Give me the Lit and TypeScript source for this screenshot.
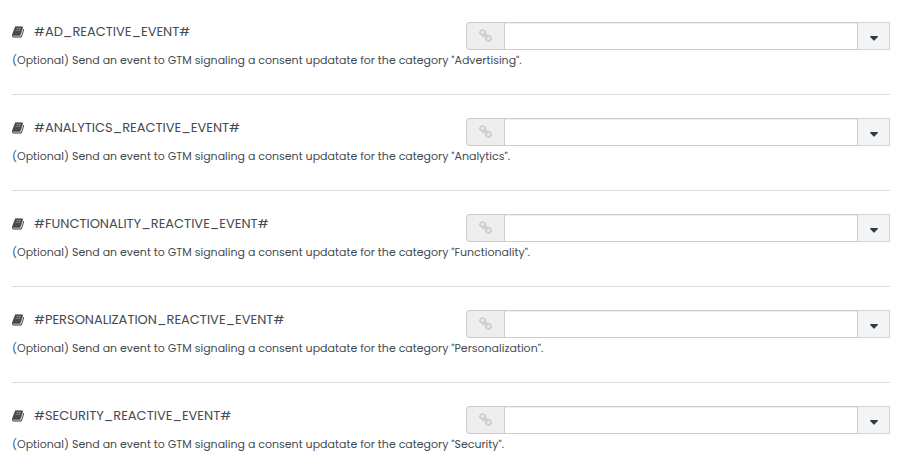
import { LitElement, html, css, svg } from "lit";
import { customElement, property } from "lit/decorators.js";

const bookPath =
  "M1639 1058q40-57 18-129l-275-906q-19-64-76.5-107.5t-122.5-43.5h-923q-77 0-148.5 53.5t-99.5 131.5q-24 67-2 127 0 4 3 27t4 37q1 8-3 21.5t-3 19.5q2 11 8 21t16.5 23.5t16.5 23.5q23 38 45 91.5t30 91.5q3 10 .5 30t-.5 28q3 11 17 28t17 23q21 36 42 92t25 90q1 9-2.5 32t.5 28q4 13 22 30.5t22 22.5q19 26 42.5 84.5t27.5 96.5q1 8-3 25.5t-2 26.5q2 8 9 18t18 23t17 21q8 12 16.5 30.5t15 35t16 36t19.5 32t26.5 23.5t36 11.5t47.5-5.5l-1-3q38 9 51 9h761q74 0 114-56t18-130l-274-906q-36-119-71.5-153.5t-128.5-34.5h-869q-27 0-38-15q-11-16-1-43q24-70 144-70h923q29 0 56 15.5t35 41.5l300 987q7 22 5 57q38-15 59-43zM575 1056q-4-13 2-22.5t20-9.5h608q13 0 25.5 9.5t16.5 22.5l21 64q4 13-2 22.5t-20 9.5h-608q-13 0-25.5-9.5t-16.5-22.5zM492 800q-4-13 2-22.5t20-9.5h608q13 0 25.5 9.5t16.5 22.5l21 64q4 13-2 22.5t-20 9.5h-608q-13 0-25.5-9.5t-16.5-22.5z";
const linkPath =
  "M1456 320q0 40-28 68l-208 208q-28 28-68 28q-42 0-72-32q3-3 19-18.5t21.5-21.5t15-19t13-25.5t3.5-27.5q0-40-28-68t-68-28q-15 0-27.5 3.5t-25.5 13t-19 15t-21.5 21.5t-18.5 19q-33-31-33-73q0-40 28-68l206-207q27-27 68-27q40 0 68 26l147 146q28 28 28 67zM753 1025q0 40-28 68l-206 207q-28 28-68 28q-39 0-68-27l-147-146q-28-28-28-67q0-40 28-68l208-208q27-27 68-27q42 0 72 31q-3 3-19 18.5t-21.5 21.5t-15 19t-13 25.5t-3.5 27.5q0 40 28 68t68 28q15 0 27.5-3.5t25.5-13t19-15t21.5-21.5t18.5-19q33 31 33 73zM1648 320q0-120-85-203l-147-146q-83-83-203-83q-121 0-204 85l-206 207q-83 83-83 203q0 123 88 209l-88 88q-86-88-208-88q-120 0-204 84l-208 208q-84 84-84 204t85 203l147 146q83 83 203 83q121 0 204-85l206-207q83-83 83-203q0-123-88-209l88-88q86 88 208 88q120 0 204-84l208-208q84-84 84-204z";

// Glyph outlines use a y-up grid, so the path is flipped into SVG space.
const glyph = (path: string, weight = 0) =>
  svg`<path transform="translate(0 1408) scale(1 -1)" fill="currentColor" stroke="currentColor" stroke-width=${weight} d=${path}></path>`;

@customElement("event-field")
export class EventField extends LitElement {
  @property() name = "";
  @property() category = "";

  static styles = css`
    :host {
      display: block;
    }
    .field {
      display: grid;
      grid-template-columns: 454fr 424fr;
    }
    .label {
      display: flex;
      align-items: center;
      gap: 10px;
      height: 20px;
      font-size: 13px;
      white-space: nowrap;
    }
    .book {
      width: 12px;
      height: 12px;
    }
    .group {
      display: flex;
      height: 28px;
    }
    .addon {
      box-sizing: border-box;
      width: 38px;
      flex: none;
      display: flex;
      align-items: center;
      justify-content: center;
      background: #eee;
      border: 1px solid #ccc;
      border-right: 0;
      border-radius: 4px 0 0 4px;
      color: #ccc;
    }
    .link {
      width: 13px;
      height: 14px;
    }
    .input {
      box-sizing: border-box;
      flex: 1;
      min-width: 0;
      margin: 0;
      padding: 4px 8px;
      border: 1px solid #ccc;
      border-radius: 0;
      background: #fff;
      box-shadow: inset 0 1px 1px rgba(0, 0, 0, 0.075);
      color: inherit;
      font: inherit;
      font-size: 12px;
    }
    .toggle {
      box-sizing: border-box;
      width: 32px;
      flex: none;
      display: flex;
      align-items: center;
      justify-content: center;
      margin: 0;
      padding: 4px 0 0;
      border: 1px solid #d2d2d2;
      border-left: 0;
      border-radius: 0;
      background: #f4f4f4;
      color: #2b3d51;
    }
    .caret {
      width: 8px;
      height: 5px;
    }
    .help {
      grid-column: 1 / -1;
      margin: 0;
      font-size: 11px;
      line-height: 20px;
    }
  `;

  render() {
    return html`
      <div class="field">
        <label class="label" for="value">
          <svg class="book" viewBox="0 0 1664 1536" aria-hidden="true">
            <path fill="currentColor" fill-opacity="0.6" d="M560 240H1300L1180 660H440Z"></path>
            ${glyph(bookPath, 20)}
          </svg>
          ${this.name}
        </label>
        <div class="group">
          <span class="addon">
            <svg class="link" viewBox="0 -128 1664 1792" aria-hidden="true">
              ${glyph(linkPath, 50)}
            </svg>
          </span>
          <input class="input" id="value" type="text" aria-describedby="help" />
          <button class="toggle" type="button" aria-label="Choose a value">
            <svg class="caret" viewBox="0 0 8 5" aria-hidden="true">
              <path
                fill="currentColor"
                d="M.6 0H7.4Q8 0 8 .5Q8 .8 7.8 1L4.4 4.6Q4 5 3.6 4.6L.2 1Q0 .8 0 .5Q0 0 .6 0Z"
              ></path>
            </svg>
          </button>
        </div>
        <p class="help" id="help">
          (Optional) Send an event to GTM signaling a consent updatate for the category
          "${this.category}".
        </p>
      </div>
    `;
  }
}

@customElement("app-root")
export class AppRoot extends LitElement {
  static styles = css`
    :host {
      display: block;
      background: #fff;
      color: #444a52;
      font-family: Poppins, Inter, "Open Sans", sans-serif;
    }
    .list {
      padding: 0 24px 0 12px;
    }
    .item {
      display: block;
      padding: 23px 0 24px;
      border-bottom: 1px solid #ddd;
    }
    .item:first-child {
      padding-top: 22px;
    }
    .item:last-child {
      border-bottom: 0;
      padding-bottom: 0;
    }
  `;

  private fields = [
    ["#AD_REACTIVE_EVENT#", "Advertising"],
    ["#ANALYTICS_REACTIVE_EVENT#", "Analytics"],
    ["#FUNCTIONALITY_REACTIVE_EVENT#", "Functionality"],
    ["#PERSONALIZATION_REACTIVE_EVENT#", "Personalization"],
    ["#SECURITY_REACTIVE_EVENT#", "Security"],
  ];

  render() {
    return html`
      <form class="list">
        ${this.fields.map(
          ([name, category]) =>
            html`<event-field class="item" .name=${name} .category=${category}></event-field>`
        )}
      </form>
    `;
  }
}
